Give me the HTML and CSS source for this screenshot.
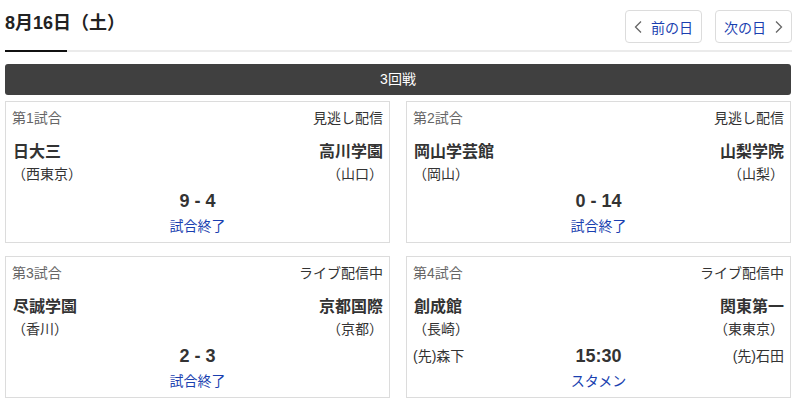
FILE: index.html
```html
<!DOCTYPE html>
<html lang="ja">
<head>
  <meta charset="UTF-8" />
  <meta name="viewport" content="width=device-width, initial-scale=1.0"/>
  <title>8月16日（土）</title>
  <link rel="stylesheet" href="styles.css">
</head>
<body>
  <div class="page">
    <div class="header">
      <h1>8月16日（土）</h1>
      <div class="day-nav">
        <a class="day-btn" href="#">
          <svg width="8" height="12" viewBox="0 0 8 12"><polyline points="7,0.5 1.5,6 7,11.5" fill="none" stroke="#666" stroke-width="1.3"/></svg>
          <span>前の日</span>
        </a>
        <a class="day-btn" href="#">
          <span>次の日</span>
          <svg width="8" height="12" viewBox="0 0 8 12"><polyline points="1,0.5 6.5,6 1,11.5" fill="none" stroke="#666" stroke-width="1.3"/></svg>
        </a>
      </div>
    </div>
    <div class="tab-line"><div class="tab-on"></div></div>

    <div class="round-bar">3回戦</div>

    <div class="games">
      <div class="card">
        <div class="card-head"><span class="game-no">第1試合</span><span class="stream">見逃し配信</span></div>
        <div class="teams">
          <div class="team">
            <div class="name">日大三</div>
            <div class="pref">（西東京）</div>
          </div>
          <div class="team right">
            <div class="name">高川学園</div>
            <div class="pref">（山口）</div>
          </div>
        </div>
        <div class="score-row"><span class="pitcher"></span><span class="score">9 - 4</span><span class="pitcher"></span></div>
        <div class="status"><a href="#">試合終了</a></div>
      </div>

      <div class="card">
        <div class="card-head"><span class="game-no">第2試合</span><span class="stream">見逃し配信</span></div>
        <div class="teams">
          <div class="team">
            <div class="name">岡山学芸館</div>
            <div class="pref">（岡山）</div>
          </div>
          <div class="team right">
            <div class="name">山梨学院</div>
            <div class="pref">（山梨）</div>
          </div>
        </div>
        <div class="score-row"><span class="pitcher"></span><span class="score">0 - 14</span><span class="pitcher"></span></div>
        <div class="status"><a href="#">試合終了</a></div>
      </div>

      <div class="card">
        <div class="card-head"><span class="game-no">第3試合</span><span class="stream">ライブ配信中</span></div>
        <div class="teams">
          <div class="team">
            <div class="name">尽誠学園</div>
            <div class="pref">（香川）</div>
          </div>
          <div class="team right">
            <div class="name">京都国際</div>
            <div class="pref">（京都）</div>
          </div>
        </div>
        <div class="score-row"><span class="pitcher"></span><span class="score">2 - 3</span><span class="pitcher"></span></div>
        <div class="status"><a href="#">試合終了</a></div>
      </div>

      <div class="card">
        <div class="card-head"><span class="game-no">第4試合</span><span class="stream">ライブ配信中</span></div>
        <div class="teams">
          <div class="team">
            <div class="name">創成館</div>
            <div class="pref">（長崎）</div>
          </div>
          <div class="team right">
            <div class="name">関東第一</div>
            <div class="pref">（東東京）</div>
          </div>
        </div>
        <div class="score-row"><span class="pitcher">(先)森下</span><span class="score">15:30</span><span class="pitcher right">(先)石田</span></div>
        <div class="status"><a href="#">スタメン</a></div>
      </div>
    </div>
  </div>
</body>
</html>
```

FILE: styles.css
```css
body {
  margin: 0;
  font-family: "Liberation Sans", "Noto Sans CJK JP", sans-serif;
  color: #333;
  background: #fff;
}
.page {
  padding: 0 7px 0 5px;
}
.header {
  display: flex;
  justify-content: space-between;
  align-items: flex-start;
  padding-top: 10px;
  margin-bottom: 7px;
}
.header h1 {
  margin: 0;
  font-size: 18px;
  line-height: 26px;
  font-weight: bold;
  color: #222;
}
.day-nav {
  display: flex;
  gap: 13px;
  margin-right: -1px;
}
.day-btn {
  display: flex;
  align-items: center;
  justify-content: center;
  gap: 9px;
  box-sizing: border-box;
  width: 77px;
  height: 33px;
  border: 1px solid #dcdcdc;
  border-radius: 4px;
  font-size: 14px;
  color: #1a3fb0;
  text-decoration: none;
}
.tab-line {
  height: 2px;
  background: #ebebeb;
  margin-right: -1px;
}
.tab-on {
  width: 62px;
  height: 2px;
  background: #111;
}
.round-bar {
  margin-top: 12px;
  height: 31px;
  line-height: 31px;
  background: #404040;
  border-radius: 3px;
  color: #fff;
  font-size: 14px;
  text-align: center;
}
.games {
  display: grid;
  grid-template-columns: 385px 385px;
  column-gap: 16px;
  row-gap: 13px;
  margin-top: 6px;
}
.card {
  border: 1px solid #dcdcdc;
  padding: 6px 6px 6px 6px;
}
.card-head {
  display: flex;
  justify-content: space-between;
  font-size: 14px;
  line-height: 20px;
}
.game-no {
  color: #666;
}
.stream {
  color: #333;
}
.teams {
  display: flex;
  justify-content: space-between;
  margin-top: 13px;
}
.team .name {
  font-size: 16px;
  font-weight: bold;
  line-height: 22px;
  padding-left: 1px;
}
.team .pref {
  font-size: 14px;
  line-height: 22px;
}
.team.right {
  text-align: right;
}
.score-row {
  display: grid;
  grid-template-columns: 1fr auto 1fr;
  align-items: center;
  margin-top: 5px;
  height: 22px;
}
.pitcher {
  font-size: 14px;
  line-height: 22px;
}
.pitcher.right {
  text-align: right;
}
.score {
  font-size: 18px;
  font-weight: bold;
  line-height: 22px;
}
.status {
  margin-top: 4px;
  text-align: center;
  font-size: 14px;
  line-height: 20px;
}
.status a {
  color: #1a3fb0;
  text-decoration: none;
}
```
